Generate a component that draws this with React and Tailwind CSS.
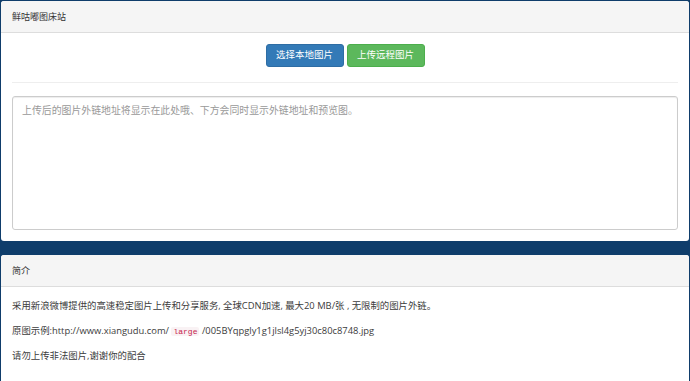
import React from "react";

const FONT = { fontFamily: '"Open Sans", "Noto Sans CJK SC", sans-serif' };

function Panel({ title, children, className = "" }) {
    return (
        <div className={`bg-white rounded-[3px] mx-px overflow-hidden ${className}`}>
            <div className="h-[32px] bg-[#f5f5f5] border-b border-[#dddddd] flex items-center px-[11px] text-[9px] text-[#333333]">{title}</div>
            {children}
        </div>
    );
}

export default function App() {
    return (
        <div className="w-[690px] h-[381px] overflow-hidden bg-[#0f3d6b] pt-px" style={FONT}>
            {/* 上传面板 */}
            <Panel title="鲜咕嘟图床站">
                <div className="px-[11px] pt-[11px] pb-[11px]">
                    <div className="flex justify-center gap-[3px]">
                        <button className="w-[78px] h-[23px] rounded-[3px] bg-[#337ab7] border border-[#2e6da4] text-white text-[9.5px]">选择本地图片</button>
                        <button className="w-[78px] h-[23px] rounded-[3px] bg-[#5cb85c] border border-[#4cae4c] text-white text-[9.5px]">上传远程图片</button>
                    </div>
                    <div className="mt-[15px] mb-[13px] border-t border-[#eeeeee]" />
                    <textarea
                        className="block w-full h-[134px] resize-none rounded-[3px] border border-[#cccccc] px-[9px] py-[6px] text-[9.9px] leading-[14px] text-[#555555] placeholder:text-[#999999] outline-none shadow-[inset_0_1px_1px_rgba(0,0,0,0.075)]"
                        placeholder="上传后的图片外链地址将显示在此处哦、下方会同时显示外链地址和预览图。"
                    />
                </div>
            </Panel>
            {/* 简介 */}
            <Panel title="简介" className="mt-[14px] h-[140px]">
                <div className="px-[11px] pt-[12px] text-[9.4px] leading-[14px] text-[#3c3c3c]">
                    <p className="mb-[10.5px]">采用新浪微博提供的高速稳定图片上传和分享服务, 全球CDN加速, 最大20 MB/张 , 无限制的图片外链。</p>
                    <p className="mb-[10.5px]">
                        原图示例:http://www.xiangudu.com/{" "}
                        <code className="px-[2px] rounded-[2px] bg-[#f9f2f4] text-[#c7254e] text-[8px]" style={{ fontFamily: '"Liberation Mono", monospace' }}>
                            large
                        </code>{" "}
                        /005BYqpgly1g1jlsl4g5yj30c80c8748.jpg
                    </p>
                    <p>请勿上传非法图片,谢谢你的配合</p>
                </div>
            </Panel>
        </div>
    );
}
